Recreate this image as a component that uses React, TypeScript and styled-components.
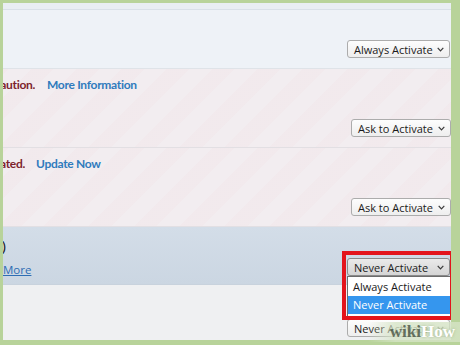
import React from 'react';
import styled, { createGlobalStyle, css } from 'styled-components';

const GlobalStyle = createGlobalStyle`
  html, body {
    margin: 0;
    padding: 0;
    width: 460px;
    height: 345px;
    overflow: hidden;
    background: #b8d39a;
  }
  #root {
    height: 100%;
  }
`;

const Frame = styled.div`
  position: relative;
  height: 345px;
  box-sizing: border-box;
  padding: 3px 9px 5px 3px;
  background: #b8d39a;
  font-family: "Open Sans", "Noto Sans", sans-serif;
`;

const List = styled.div`
  height: 100%;
  display: flex;
  flex-direction: column;
  overflow: hidden;
  background: #eff0f2;
`;

const TopSliver = styled.div`
  height: 6px;
  flex: none;
  background: #e9eef3;
  border-bottom: 1px solid #d9e0e8;
`;

type Variant = 'plain' | 'blocked' | 'selected' | 'white';

const variants = {
  plain: css`
    background: #eef2f7;
    border-bottom: 1px solid #dfe3e8;
  `,
  blocked: css`
    background-color: #f2edf0;
    background-image: repeating-linear-gradient(
      -45deg,
      rgba(255, 255, 255, 0) 0px,
      rgba(255, 255, 255, 0) 16px,
      rgba(240, 205, 210, 0.1) 16px,
      rgba(240, 205, 210, 0.1) 32px
    );
    border-bottom: 1px solid #e2dfe3;
  `,
  selected: css`
    background: linear-gradient(#d3dde8, #cbd6e2);
    border-bottom: 1px solid #c8d2dd;
  `,
  white: css`
    background: #eff0f2;
  `,
};

const Row = styled.div<{ $variant: Variant; $height: number; $pad: number }>`
  flex: none;
  height: ${(p) => p.$height}px;
  box-sizing: border-box;
  display: flex;
  justify-content: space-between;
  align-items: flex-end;
  padding-bottom: ${(p) => p.$pad}px;
  ${(p) => variants[p.$variant]}
`;

const Info = styled.div<{ $top: number }>`
  align-self: stretch;
  display: flex;
  flex-direction: column;
  gap: 8px;
  padding-top: ${(p) => p.$top}px;
`;

const MessageLine = styled.div`
  display: flex;
  align-items: center;
  font-family: Lato, "Open Sans", sans-serif;
  font-size: 12px;
  letter-spacing: -0.3px;
  font-weight: 700;
  line-height: 16px;
  white-space: nowrap;
`;

/* text cut by the left edge of the screenshot: overflow to the start side */
const Clipped = styled.div<{ $width: number }>`
  width: ${(p) => p.$width}px;
  display: flex;
  justify-content: flex-end;
  overflow: hidden;
  flex: none;
`;

const Warning = styled.span`
  color: #7d1f2c;
`;

const BoldLink = styled.span<{ $gap: number }>`
  color: #2f7bbd;
  margin-left: ${(p) => p.$gap}px;
`;

const TitleLine = styled.div`
  display: flex;
  font-size: 15px;
  line-height: 18px;
  color: #1c1c1c;
  white-space: nowrap;
`;

const PlainLink = styled.span`
  font-size: 11.5px;
  line-height: 15px;
  color: #2e6db3;
  text-decoration: underline;
`;

const SelectWrap = styled.div<{ $raised?: boolean }>`
  position: relative;
  flex: none;
  ${(p) => p.$raised && 'z-index: 5;'}
`;

const Select = styled.div<{ $width: number; $open?: boolean; $right?: number }>`
  width: ${(p) => p.$width}px;
  height: 18px;
  box-sizing: border-box;
  margin-right: ${(p) => p.$right ?? 1}px;
  display: flex;
  align-items: center;
  justify-content: space-between;
  padding: 0 5px 0 6px;
  border: 1px solid ${(p) => (p.$open ? '#8a8a8a' : '#acacac')};
  border-radius: 3px;
  background: ${(p) =>
    p.$open
      ? 'linear-gradient(#eaeaea, #d5d5d5)'
      : 'linear-gradient(#fdfdfd, #eeeeee)'};
  font-size: 11px;
  color: #1a1a1a;
  white-space: nowrap;
`;

const Chevron = () => (
  <svg width="7" height="5" viewBox="0 0 7 5">
    <polyline points="0.7,0.8 3.5,3.8 6.3,0.8" fill="none" stroke="#3a3a3a" strokeWidth="1.2" />
  </svg>
);

const Dropdown = styled.div`
  position: absolute;
  top: 100%;
  left: 0;
  width: 104px;
  box-sizing: border-box;
  padding: 1px 0 2px;
  background: #ffffff;
  border: 1px solid #6c6c6c;
  font-size: 11px;
  white-space: nowrap;
`;

const Option = styled.div<{ $active?: boolean }>`
  height: 18px;
  line-height: 18px;
  padding-left: 5px;
  color: ${(p) => (p.$active ? '#ffffff' : '#1a1a1a')};
  background: ${(p) => (p.$active ? '#3596ee' : 'transparent')};
`;

const Callout = styled.div`
  position: absolute;
  top: -7px;
  left: -5px;
  right: -3px;
  bottom: -44px;
  border: 4px solid #e3141c;
  pointer-events: none;
`;

const Watermark = styled.div`
  position: absolute;
  right: 0;
  bottom: 3px;
  padding: 0 5px 0 22px;
  font-family: "Liberation Serif", "DejaVu Serif", serif;
  font-weight: 700;
  font-size: 17px;
  line-height: 20px;
  background: linear-gradient(to right, rgba(230, 238, 222, 0), rgba(214, 228, 198, 0.8) 30%);
`;

const Wiki = styled.span`
  color: #3e4a3b;
  opacity: 0.75;
`;

const How = styled.span`
  color: #ffffff;
  text-shadow: 0 0 3px rgba(120, 150, 100, 0.6);
`;

export default function App() {
  return (
    <>
      <GlobalStyle />
      <Frame>
        <List>
          <TopSliver />

          <Row $variant="plain" $height={59} $pad={10}>
            <Info $top={0} />
            <SelectWrap>
              <Select $width={103} $right={1}>
                Always Activate <Chevron />
              </Select>
            </SelectWrap>
          </Row>

          <Row $variant="blocked" $height={79} $pad={10}>
            <Info $top={8}>
              <MessageLine>
                <Clipped $width={32}>
                  <Warning>This plugin is vulnerable and should be used with caution.</Warning>
                </Clipped>
                <BoldLink $gap={12}>More Information</BoldLink>
              </MessageLine>
            </Info>
            <SelectWrap>
              <Select $width={100} $right={0}>
                Ask to Activate <Chevron />
              </Select>
            </SelectWrap>
          </Row>

          <Row $variant="blocked" $height={79} $pad={10}>
            <Info $top={8}>
              <MessageLine>
                <Clipped $width={22}>
                  <Warning>This plugin is vulnerable and should be updated.</Warning>
                </Clipped>
                <BoldLink $gap={11}>Update Now</BoldLink>
              </MessageLine>
            </Info>
            <SelectWrap>
              <Select $width={100} $right={0}>
                Ask to Activate <Chevron />
              </Select>
            </SelectWrap>
          </Row>

          <Row $variant="selected" $height={58} $pad={8}>
            <Info $top={9}>
              <TitleLine>
                <Clipped $width={3}>
                  <span>Silverlight Plug-In 5.1.50918.0)</span>
                </Clipped>
              </TitleLine>
              <PlainLink>More</PlainLink>
            </Info>
            <SelectWrap $raised>
              <Select $width={103} $right={1} $open>
                Never Activate <Chevron />
              </Select>
              <Dropdown>
                <Option>Always Activate</Option>
                <Option $active>Never Activate</Option>
              </Dropdown>
              <Callout />
            </SelectWrap>
          </Row>

          <Row $variant="white" $height={55} $pad={3}>
            <Info $top={0} />
            <SelectWrap>
              <Select $width={103} $right={1}>
                Never Activate <Chevron />
              </Select>
            </SelectWrap>
          </Row>
        </List>
        <Watermark>
          <Wiki>wiki</Wiki>
          <How>How</How>
        </Watermark>
      </Frame>
    </>
  );
}
